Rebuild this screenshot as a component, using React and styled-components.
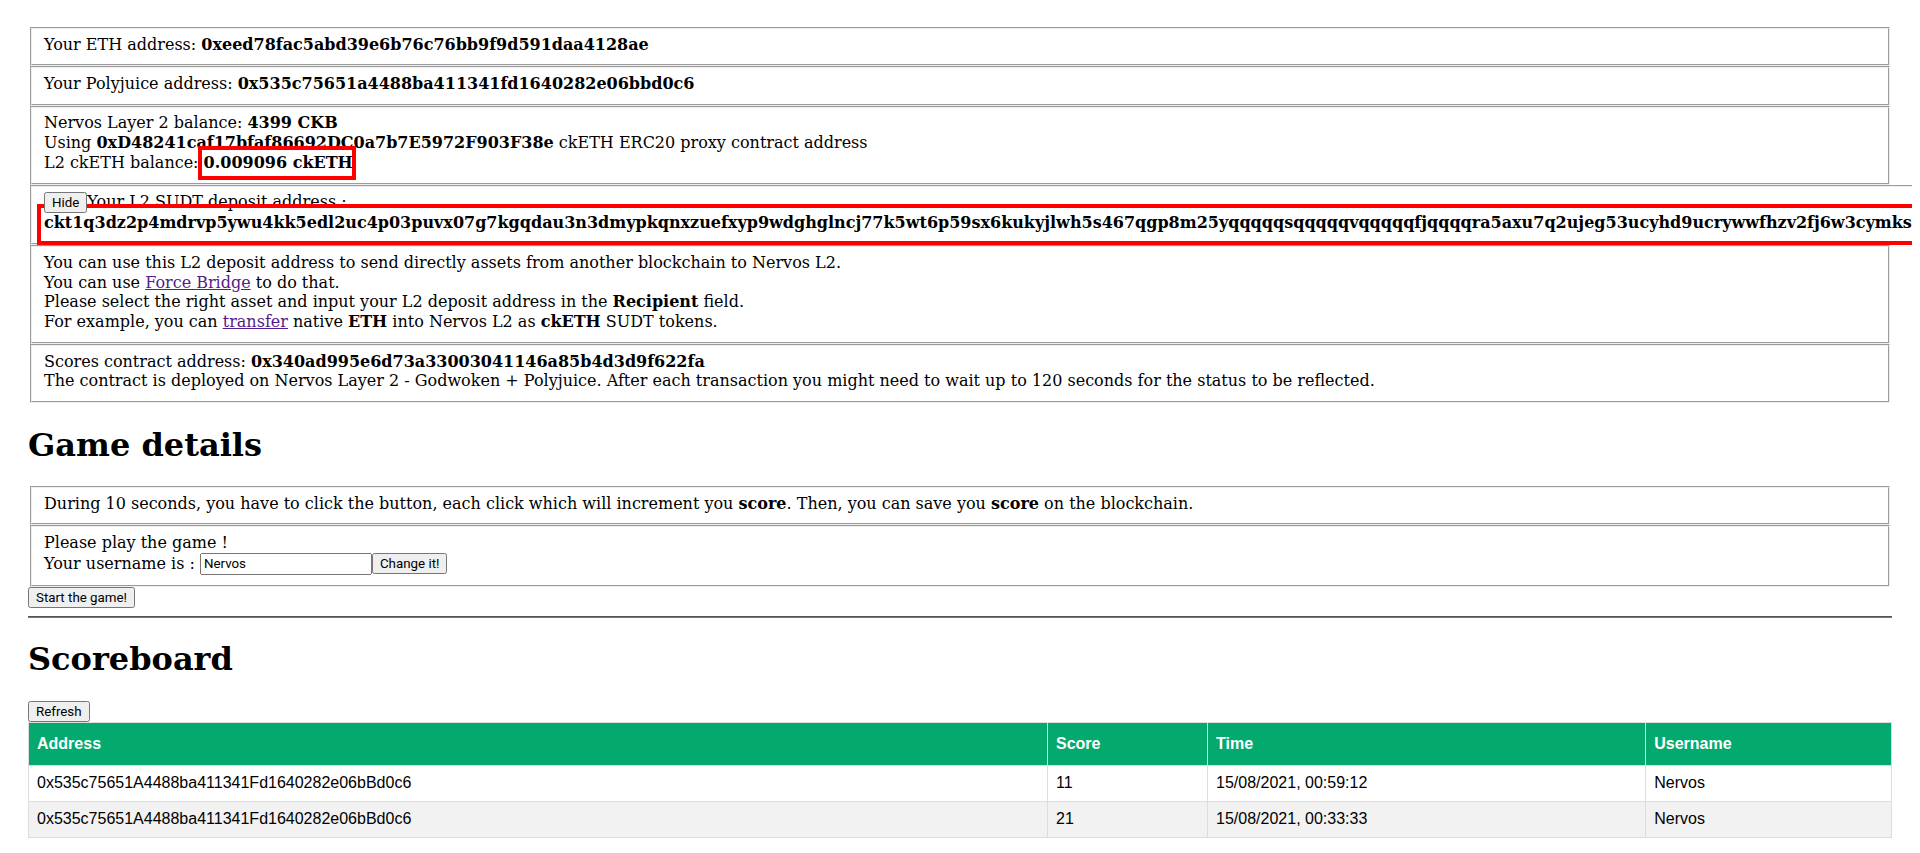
import styled, { createGlobalStyle } from 'styled-components'

const GlobalStyle = createGlobalStyle`
    html, body {
        overflow-x: hidden;
    }
    body {
        margin: 8px;
        background: #fff;
        color: #000;
        font-family: "DejaVu Serif", serif;
        font-size: 16px;
        line-height: 19.8px;
    }
`

const Page = styled.div`
    padding: 19px 20px 0;
`

const Panel = styled.fieldset`
    display: block;
    margin: 0 2px;
    padding: 0.35em 0.75em 0.625em;
    border: 2px groove ThreeDFace;
    min-inline-size: min-content;
`

const Heading = styled.h1`
    font-size: 2em;
    line-height: 40px;
    font-weight: bold;
    margin: 0.67em 0;
`

const Marked = styled.b`
    position: relative;

    &::after {
        content: '';
        position: absolute;
        top: -7px;
        bottom: -8px;
        left: -6px;
        right: -3px;
        border: 4px solid #ff0000;
        pointer-events: none;
    }
`

const DepositLine = styled.div`
    position: relative;
    font-weight: bold;
    white-space: nowrap;

    &::after {
        content: '';
        position: absolute;
        top: -9px;
        bottom: -12px;
        left: -7px;
        right: -7px;
        border: 4px solid #ff0000;
        pointer-events: none;
    }
`

const NativeButton = styled.button`
    font-family: Roboto, "Noto Sans", sans-serif;
    font-size: 13.333px;
    position: relative;
    z-index: 1;
`

const NameInput = styled.input`
    font-family: Roboto, "Noto Sans", sans-serif;
    font-size: 13.333px;
    box-sizing: border-box;
    width: 172px;
    height: 22px;
`

const Link = styled.a`
    color: #551a8b;
    text-decoration: underline;
`

const Rule = styled.hr`
    margin: 8px 0;
    border: none;
    border-top: 1px solid #555;
    border-bottom: 1px solid #777;
    overflow: hidden;
`

const ScoreTable = styled.table`
    font-family: "Liberation Sans", Arial, Helvetica, sans-serif;
    line-height: normal;
    border-collapse: collapse;
    width: 100%;

    tr:nth-child(even) {
        background-color: #f2f2f2;
    }
`

const HeadCell = styled.th`
    border: 1px solid #ddd;
    padding: 12px 8px;
    text-align: left;
    background-color: #04aa6d;
    color: #fff;
`

const Cell = styled.td`
    border: 1px solid #ddd;
    padding: 8px;
    height: 19px;
`

const depositAddress = 'ckt1q3dz2p4mdrvp5ywu4kk5edl2uc4p03puvx07g7kgqdau3n3dmypkqnxzuefxyp9wdghglncj77k5wt6p59sx6kukyjlwh5s467qgp8m25yqqqqqsqqqqqvqqqqqfjqqqqra5axu7q2ujeg53ucyhd9ucrywwfhzv2fj6w3cymksqqqqqqqqqqqqqqqqqqqqqqqqqqqqqqqqqqqqqqqqqqqqqqqqqqqqqqqqq9n6srz'

const scores = [
    { address: '0x535c75651A4488ba411341Fd1640282e06bBd0c6', score: 11, time: '15/08/2021, 00:59:12', username: 'Nervos' },
    { address: '0x535c75651A4488ba411341Fd1640282e06bBd0c6', score: 21, time: '15/08/2021, 00:33:33', username: 'Nervos' },
]

export default function App() {
    return (
        <>
            <GlobalStyle />
            <Page>
                <Panel>
                    Your ETH address: <b>0xeed78fac5abd39e6b76c76bb9f9d591daa4128ae</b>
                </Panel>
                <Panel>
                    Your Polyjuice address: <b>0x535c75651a4488ba411341fd1640282e06bbd0c6</b>
                </Panel>
                <Panel>
                    Nervos Layer 2 balance: <b>4399 CKB</b>
                    <br />
                    Using <b>0xD48241caf17bfaf86692DC0a7b7E5972F903F38e</b> ckETH ERC20 proxy contract address
                    <br />
                    L2 ckETH balance: <Marked>0.009096 ckETH</Marked>
                </Panel>
                <Panel>
                    <NativeButton>Hide</NativeButton>Your L2 SUDT deposit address :
                    <DepositLine>{depositAddress}</DepositLine>
                </Panel>
                <Panel>
                    You can use this L2 deposit address to send directly assets from another blockchain to Nervos L2.
                    <br />
                    You can use <Link href="#">Force Bridge</Link> to do that.
                    <br />
                    Please select the right asset and input your L2 deposit address in the <b>Recipient</b> field.
                    <br />
                    For example, you can <Link href="#">transfer</Link> native <b>ETH</b> into Nervos L2 as <b>ckETH</b> SUDT tokens.
                </Panel>
                <Panel>
                    Scores contract address: <b>0x340ad995e6d73a33003041146a85b4d3d9f622fa</b>
                    <br />
                    The contract is deployed on Nervos Layer 2 - Godwoken + Polyjuice. After each transaction you might need to wait up to 120 seconds for the status to be reflected.
                </Panel>

                <Heading>Game details</Heading>
                <Panel>
                    During 10 seconds, you have to click the button, each click which will increment you <b>score</b>. Then, you can save you <b>score</b> on the blockchain.
                </Panel>
                <Panel>
                    Please play the game !
                    <br />
                    Your username is : <NameInput defaultValue="Nervos" /><NativeButton>Change it!</NativeButton>
                </Panel>
                <NativeButton>Start the game!</NativeButton>
                <Rule />

                <Heading>Scoreboard</Heading>
                <NativeButton>Refresh</NativeButton>
                <ScoreTable>
                    <thead>
                        <tr>
                            <HeadCell>Address</HeadCell>
                            <HeadCell>Score</HeadCell>
                            <HeadCell>Time</HeadCell>
                            <HeadCell>Username</HeadCell>
                        </tr>
                    </thead>
                    <tbody>
                        {scores.map((row, i) => (
                            <tr key={i}>
                                <Cell>{row.address}</Cell>
                                <Cell>{row.score}</Cell>
                                <Cell>{row.time}</Cell>
                                <Cell>{row.username}</Cell>
                            </tr>
                        ))}
                    </tbody>
                </ScoreTable>
            </Page>
        </>
    )
}
